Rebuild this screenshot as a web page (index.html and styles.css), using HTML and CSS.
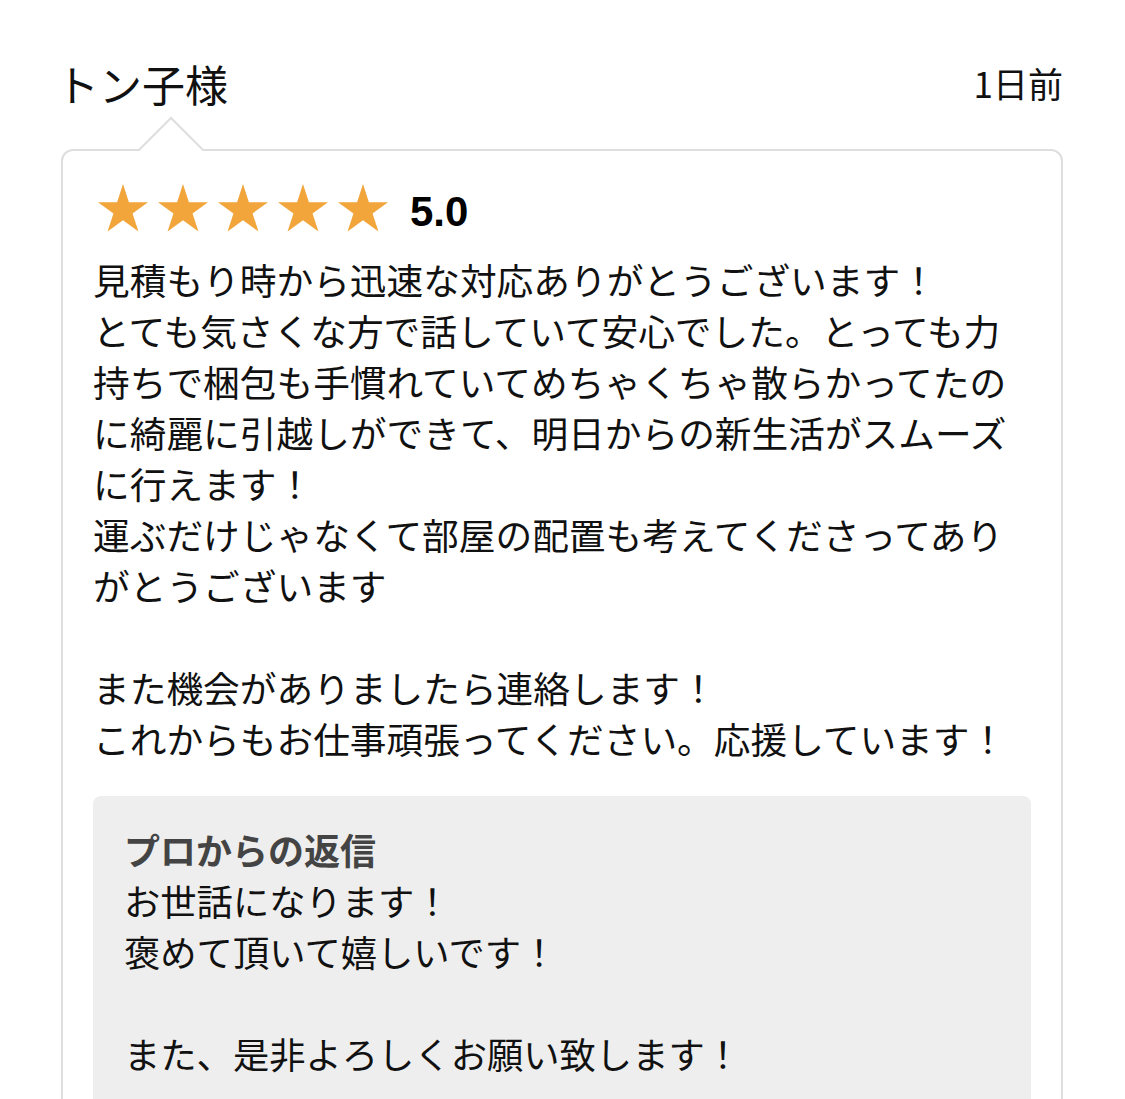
FILE: index.html
```
<!DOCTYPE html>
<html lang="ja">
<head>
<meta charset="utf-8">
<title>レビュー</title>
<link rel="stylesheet" href="styles.css">
</head>
<body>
<div class="page">
  <div class="review-header">
    <div class="reviewer">トン子様</div>
    <div class="date">1日前</div>
  </div>
  <div class="card">
    <div class="rating">
      <div class="stars">
        <svg class="star" viewBox="0 0 50 48" width="50" height="48"><polygon points="25,0 30.9,18.17 50,18.17 34.55,29.39 40.45,47.56 25,36.33 9.55,47.56 15.45,29.39 0,18.17 19.1,18.17"/></svg>
        <svg class="star" viewBox="0 0 50 48" width="50" height="48"><polygon points="25,0 30.9,18.17 50,18.17 34.55,29.39 40.45,47.56 25,36.33 9.55,47.56 15.45,29.39 0,18.17 19.1,18.17"/></svg>
        <svg class="star" viewBox="0 0 50 48" width="50" height="48"><polygon points="25,0 30.9,18.17 50,18.17 34.55,29.39 40.45,47.56 25,36.33 9.55,47.56 15.45,29.39 0,18.17 19.1,18.17"/></svg>
        <svg class="star" viewBox="0 0 50 48" width="50" height="48"><polygon points="25,0 30.9,18.17 50,18.17 34.55,29.39 40.45,47.56 25,36.33 9.55,47.56 15.45,29.39 0,18.17 19.1,18.17"/></svg>
        <svg class="star" viewBox="0 0 50 48" width="50" height="48"><polygon points="25,0 30.9,18.17 50,18.17 34.55,29.39 40.45,47.56 25,36.33 9.55,47.56 15.45,29.39 0,18.17 19.1,18.17"/></svg>
      </div>
      <div class="score">5.0</div>
    </div>
    <p class="review-text">見積もり時から迅速な対応ありがとうございます！<br>とても気さくな方で話していて安心でした。とっても力持ちで梱包も手慣れていてめちゃくちゃ散らかってたのに綺麗に引越しができて、明日からの新生活がスムーズに行えます！<br>運ぶだけじゃなくて部屋の配置も考えてくださってありがとうございます<br><br>また機会がありましたら連絡します！<br>これからもお仕事頑張ってください。応援しています！</p>
    <div class="reply">
      <div class="reply-title">プロからの返信</div>
      <p class="reply-text">お世話になります！<br>褒めて頂いて嬉しいです！<br><br>また、是非よろしくお願い致します！</p>
    </div>
  </div>
</div>
</body>
</html>
```
FILE: styles.css
```
html, body {
  margin: 0;
  padding: 0;
  background: #fff;
}
body {
  font-family: "Noto Sans CJK JP", "Noto Sans", sans-serif;
  color: #111;
}
.page {
  padding: 55px 62px 0 61px;
}
.review-header {
  display: flex;
  justify-content: space-between;
  align-items: center;
  height: 56px;
  margin-left: -5px;
}
.reviewer {
  font-size: 43px;
  line-height: 56px;
}
.date {
  font-size: 35px;
  line-height: 56px;
}
.card {
  position: relative;
  margin-top: 38px;
  border: 2px solid #dedede;
  border-radius: 12px;
  padding: 33px 30px 40px 30px;
  min-height: 1000px;
}
.card::before {
  content: "";
  position: absolute;
  left: 85px;
  top: -25px;
  width: 46px;
  height: 46px;
  box-sizing: border-box;
  background: #fff;
  border-top: 2px solid #dedede;
  border-left: 2px solid #dedede;
  transform: rotate(45deg);
}
.rating {
  position: relative;
  display: flex;
  align-items: center;
  height: 48px;
  padding-left: 5px;
}
.stars {
  display: flex;
  gap: 10px;
}
.star {
  display: block;
  fill: #f1a53b;
}
.score {
  margin-left: 22px;
  padding-top: 7px;
  font-family: "Liberation Sans", Arial, sans-serif;
  font-weight: bold;
  font-size: 42px;
  line-height: 48px;
  color: #000;
}
.review-text {
  margin: 22px 0 0 0;
  font-size: 36.7px;
  line-height: 51px;
}
.reply {
  margin-top: 32px;
  background: #eeeeee;
  border-radius: 8px;
  padding: 28px 31px 40px 31px;
}
.reply-title {
  font-size: 36px;
  line-height: 51px;
  font-weight: bold;
  color: #444;
}
.reply-text {
  margin: 0;
  font-size: 36.3px;
  line-height: 51px;
}
```
